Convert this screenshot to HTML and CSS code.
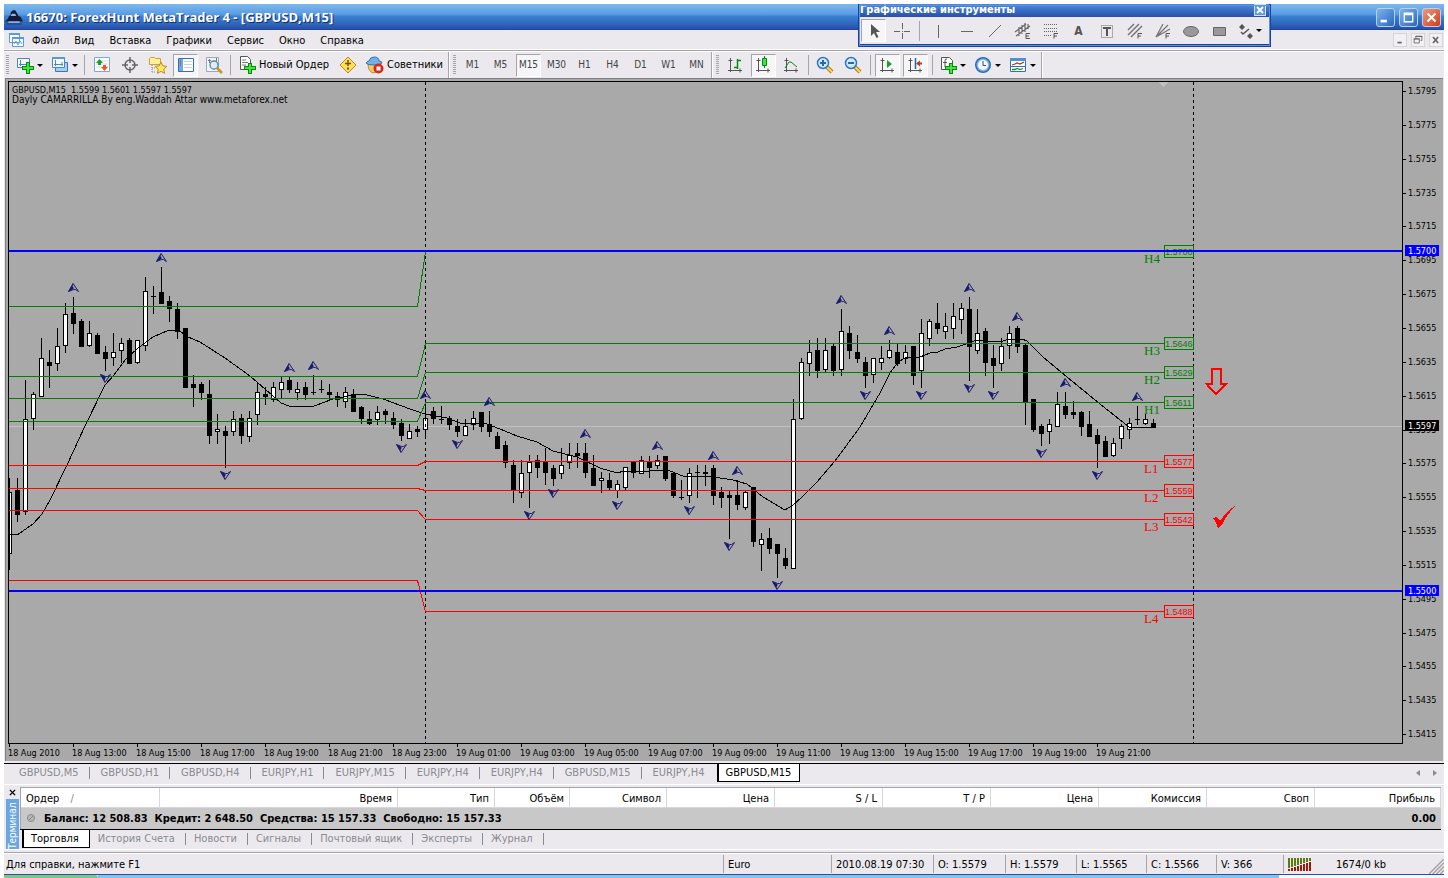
FILE: index.html
```html
<!DOCTYPE html>
<html lang="ru">
<head>
<meta charset="utf-8">
<title>16670: ForexHunt MetaTrader 4 - [GBPUSD,M15]</title>
<link rel="stylesheet" href="styles.css">
</head>
<body>
<div class="window">
  <header class="titlebar">
    <svg class="icon" viewBox="0 0 16 16"><path d="M0 12 3 9 3 8 5 6 5 4 7 2 9 2 11 5 12 7 14 8 16 12Z" fill="#101c38"/><path d="M6 5h3l1 2H5z" fill="#8fb4e0"/><path d="M1 13h14v2H1z" fill="#244f96"/><path d="M3 12h10v1H3z" fill="#c6dcf6"/></svg>
    <h1 class="title">16670: ForexHunt MetaTrader 4 - [GBPUSD,M15]</h1>
    <div class="window-buttons">
      <button class="winbtn" aria-label="Свернуть"><svg viewBox="0 0 19 19"><path d="M4 12h7v3H4z" fill="#fff"/></svg></button>
      <button class="winbtn" aria-label="Развернуть"><svg viewBox="0 0 19 19"><path d="M4 4h11v11H4zM5.500 7v6.500h8V7z" fill="#fff" fill-rule="evenodd"/></svg></button>
      <button class="winbtn winbtn-close" aria-label="Закрыть"><svg viewBox="0 0 19 19"><path d="M5 5l9 9M14 5l-9 9" stroke="#fff" stroke-width="2.200"/></svg></button>
    </div>
  </header>

  <nav class="menubar">
    <svg class="icon menu-icon" viewBox="0 0 16 16"><path d="M1.500 1.500h10v9h-10zM4.500 5.500h11v9h-11z" fill="#fff" stroke="#5b9bdc"/><path d="M1 1h11v2H1zM4 5h12v2H4z" fill="#5b9bdc"/><path d="M6 12l2-3 2 4 2-4 2 3" fill="none" stroke="#5b9bdc"/></svg>
    <button class="menu">Файл</button><button class="menu">Вид</button><button class="menu">Вставка</button><button class="menu">Графики</button><button class="menu">Сервис</button><button class="menu">Окно</button><button class="menu">Справка</button>
    <div class="mdi-buttons">
      <button class="mdi" aria-label="Свернуть окно"><svg viewBox="0 0 14 14"><path d="M4 9h5v2H4z" fill="#666"/></svg></button>
      <button class="mdi" aria-label="Восстановить окно"><svg viewBox="0 0 14 14"><path d="M4.500 5V2.500h7v5H10M2.500 5.500h6v5h-6zM2 6h7M4 3h8" fill="none" stroke="#666"/></svg></button>
      <button class="mdi" aria-label="Закрыть окно"><svg viewBox="0 0 14 14"><path d="M3.500 3.500l6 7M9.500 3.500l-6 7" stroke="#666" stroke-width="2"/></svg></button>
    </div>
  </nav>

  <div class="toolbar">
    <div class="group">
      <span class="grip"></span>
      <button class="tool drop" aria-label="Новый график"><svg class="icon" viewBox="0 0 18 18"><path d="M1.500 2.500h12v9h-12z" fill="#f4faff" stroke="#4a87c0"/><path d="M4.500 4v6M3 8.500h9" stroke="#4a87c0"/><path d="M10 6h4v4h4v4h-4v4h-4v-4H6v-4h4z" fill="#0a8a0a"/><path d="M11 7h2v4h4v2h-4v4h-2v-4H7v-2h4z" fill="#3fe43f"/></svg><span class="caret"></span></button>
      <button class="tool drop" aria-label="Профили"><svg class="icon" viewBox="0 0 18 18"><path d="M4.500 6.500h12v9h-12z" fill="#a9cdec" stroke="#3b78b4"/><path d="M1.500 1.500h12v10h-12z" fill="#f4faff" stroke="#4a87c0"/><path d="M1 1h13v2H1z" fill="#5a98d0"/><path d="M4.500 4v6M3 8.500h9M11 6v4" stroke="#4a87c0"/></svg><span class="caret"></span></button>
      <span class="sep"></span>
      <button class="tool" aria-label="Обзор рынка"><svg class="icon" viewBox="0 0 18 18"><path d="M1.500 1.500h15v14h-15z" fill="#fff" stroke="#79a9dc"/><path d="M3 5h12M3 8h12M3 11h12" stroke="#c6d8ee"/><path d="M6.500 3l3.500 4H8v2H5V7H3z" fill="#19a119"/><path d="M11.500 15L8 11h2V9h3v2h2z" fill="#f0552a"/></svg></button>
      <button class="tool" aria-label="Окно данных"><svg class="icon" viewBox="0 0 18 18"><circle cx="9" cy="9" r="5" fill="none" stroke="#666" stroke-width="1.500"/><path d="M9 1v6M9 11v6M1 9h6M11 9h6" stroke="#666" stroke-width="1.500"/></svg></button>
      <button class="tool" aria-label="Навигатор"><svg class="icon" viewBox="0 0 18 18"><path d="M.500 2.500l1-1h4l1 1h5v6H.500z" fill="#fff09a" stroke="#c3a436"/><path d="M3 9v7M3 12h3M3 16h3" stroke="#888" stroke-dasharray="1 1"/><path d="M12 6l1.800 3.800 4 .600-3 2.800.800 4.200-3.600-2-3.600 2 .800-4.200-3-2.800 4-.600z" fill="#ffe761" stroke="#bd8d1f"/></svg></button>
      <button class="tool pressed" aria-label="Терминал"><svg class="icon" viewBox="0 0 18 18"><path d="M1.500 2.500h15v13h-15z" fill="#fff" stroke="#2e70bc"/><path d="M2 3h4v12H2z" fill="#6da9e2"/><path d="M3 5h1M3 7h1M3 9h1" stroke="#c22"/><path d="M7 5.500h8M7 8.500h8M7 11.500h8" stroke="#c4d4e6"/></svg></button>
      <button class="tool" aria-label="Тестер стратегий"><svg class="icon" viewBox="0 0 18 18"><path d="M1.500 1.500h12v14h-12z" fill="#eef4fa" stroke="#9ab"/><path d="M4.500 3v4M3 4.500h3M11.500 2v5" stroke="#777"/><circle cx="9" cy="9" r="4" fill="#d9ecfa" fill-opacity=".85" stroke="#5d87a6" stroke-width="1.300"/><path d="M12 12l5 5" stroke="#c8941a" stroke-width="2.500"/></svg></button>
      <span class="sep"></span>
      <button class="tool wide"><svg class="icon" viewBox="0 0 18 18"><path d="M2.500.500h7l3 3v10h-10z" fill="#fff" stroke="#555"/><path d="M4 4h4M4 6.500h6M4 9h4" stroke="#777"/><path d="M10 7h4v3h4v4h-4v4h-4v-4H6v-4h4z" fill="#0a8a0a"/><path d="M11 8h2v3h4v2h-4v4h-2v-4H7v-2h4z" fill="#3fe43f"/></svg>Новый Ордер</button>
      <button class="tool" aria-label="MetaEditor"><svg class="icon" viewBox="0 0 18 18"><path d="M9 1l8 8-8 8-8-8z" fill="#ffdf58" stroke="#b98a1c"/><path d="M9 4v6M6 7.500h6" stroke="#725216" stroke-width="1.500"/><path d="M8 11.500h2v2H8z" fill="#725216"/></svg></button>
      <button class="tool wide"><svg class="icon" viewBox="0 0 18 18"><path d="M2 8h11v4q-2 5-6 5-5-2-5-9z" fill="#f6ca66" stroke="#b98a2c"/><path d="M0 7q1-2 3-2 1-4 5-4 5 0 5 4 3 0 3 2-1 2-8 2T0 7z" fill="#6fb2e8" stroke="#3673ac"/><circle cx="12.500" cy="12.500" r="5" fill="#d9281c"/><path d="M10.500 10.500h4v4h-4z" fill="#fff"/></svg>Советники</button>
    </div>
    <div class="group">
      <span class="grip"></span>
      <button class="tool tf">M1</button><button class="tool tf">M5</button><button class="tool tf pressed">M15</button><button class="tool tf">M30</button><button class="tool tf">H1</button><button class="tool tf">H4</button><button class="tool tf">D1</button><button class="tool tf">W1</button><button class="tool tf">MN</button>
    </div>
    <div class="group">
      <span class="grip"></span>
      <button class="tool" aria-label="Бары"><svg class="icon" viewBox="0 0 18 18"><path d="M4.500 2v14M2 14.500h14M2.500 4.500h4M14 12.500v4" stroke="#555"/><path d="M11.500 3v10M12 4.500h3M8 11.500h3" stroke="#078a17" stroke-width="1.500"/></svg></button>
      <button class="tool pressed" aria-label="Свечи"><svg class="icon" viewBox="0 0 18 18"><path d="M4.500 2v14M2 14.500h14M2.500 4.500h4M14 12.500v4" stroke="#555"/><path d="M10.500 0v12" stroke="#078a17"/><path d="M8.500 2.500h4v7h-4z" fill="#37ea3a" stroke="#078a17"/></svg></button>
      <button class="tool" aria-label="Линия"><svg class="icon" viewBox="0 0 18 18"><path d="M4.500 2v14M2 14.500h14M2.500 4.500h4M14 12.500v4" stroke="#555"/><path d="M3 12l4-6h2l6 5" fill="none" stroke="#078a17"/></svg></button>
      <span class="sep"></span>
      <button class="tool" aria-label="Увеличить"><svg class="icon" viewBox="0 0 18 18"><path d="M11 11l5 5" stroke="#a8831c" stroke-width="4"/><path d="M11 11l5 5" stroke="#ffd84c" stroke-width="2"/><circle cx="7" cy="7" r="5.500" fill="#d4e9fb" stroke="#2d78c4" stroke-width="1.500"/><path d="M4 7h6M7 4v6" stroke="#2768b4" stroke-width="2"/></svg></button>
      <button class="tool" aria-label="Уменьшить"><svg class="icon" viewBox="0 0 18 18"><path d="M11 11l5 5" stroke="#a8831c" stroke-width="4"/><path d="M11 11l5 5" stroke="#ffd84c" stroke-width="2"/><circle cx="7" cy="7" r="5.500" fill="#d4e9fb" stroke="#2d78c4" stroke-width="1.500"/><path d="M4 7h6" stroke="#2768b4" stroke-width="2"/></svg></button>
      <span class="sep"></span>
      <button class="tool pressed" aria-label="Автопрокрутка"><svg class="icon" viewBox="0 0 18 18"><path d="M4.500 2v14M2 14.500h14M2.500 4.500h4M14 12.500v4" stroke="#555"/><path d="M9 4l5 4-5 4z" fill="#17a32b"/></svg></button>
      <button class="tool pressed" aria-label="Сдвиг графика"><svg class="icon" viewBox="0 0 18 18"><path d="M4.500 2v14M2 14.500h14M2.500 4.500h4M14 12.500v4" stroke="#555"/><path d="M9.500 2v11" stroke="#1d64a8" stroke-width="1.500"/><path d="M10 7.500l4-3v2h2v2h-2v2z" fill="#c23a18"/></svg></button>
      <span class="sep"></span>
      <button class="tool drop" aria-label="Индикаторы"><svg class="icon" viewBox="0 0 18 18"><path d="M2.500 1.500h8l3 3v9h-11z" fill="#fff" stroke="#555"/><path d="M8 3q-2-1-2 2v6M4 6.500h4" fill="none" stroke="#555"/><path d="M10 7h4v3h4v4h-4v4h-4v-4H6v-4h4z" fill="#0a8a0a"/><path d="M11 8h2v3h4v2h-4v4h-2v-4H7v-2h4z" fill="#3fe43f"/></svg><span class="caret"></span></button>
      <button class="tool drop" aria-label="Периоды"><svg class="icon" viewBox="0 0 18 18"><circle cx="9" cy="9" r="8" fill="#2b6cb8"/><circle cx="9" cy="9" r="6.500" fill="#7db7ee"/><circle cx="9" cy="9" r="5" fill="#f4faff"/><path d="M9 5v4.500h3" fill="none" stroke="#445"/></svg><span class="caret"></span></button>
      <button class="tool drop" aria-label="Шаблоны"><svg class="icon" viewBox="0 0 18 18"><path d="M1.500 2.500h15v13h-15z" fill="#fff" stroke="#2e70bc"/><path d="M1 2h16v3H1z" fill="#4c92d8"/><path d="M3 9l3-1 2-1 3 1 4-2" fill="none" stroke="#a3332a" stroke-width="1.300"/><path d="M1 10.500h16" stroke="#2e70bc"/><path d="M3 13.500h3l2-1 3 1 3-1" fill="none" stroke="#16902b" stroke-width="1.300"/></svg><span class="caret"></span></button>
    </div>
  </div>

  <svg class="chart" id="chart" viewBox="4 78 1440 683" role="img" aria-label="График GBPUSD,M15">
    <rect x="4" y="78" width="1440" height="683" fill="#a9a9a9"/>
    <path d="M4 78.500h1439M5.500 78v683" stroke="#808084"/>
    <path d="M4.500 78v683M1443.500 78v683" stroke="#e6e6ea"/>
    <path class="bid" d="M9 426.500H1402"/>
    <g id="candles"></g>
    <path class="ma" d="M9 534 17 535 33 524 42 514 50 500 67 465 85 426 105 385 114 375 126 359 137 349 153 337 169 330 174 330 181 332 188 337 200 342 225 358 250 376 265 389 281 403 289 406 314 406 333 399 343 397 357 394 363 394 383 399 410 409 425 414 447 418 460 423 487 424 500 429 517 436 537 442 553 451 577 457 600 468 617 473 624 471 650 471 657 470 670 471 683 476 693 477 707 476 733 480 747 484 763 497 785 510 793 505 802 497 817 482 835 461 860 427 880 393 890 373 898 362 905 358 920 357 930 353 938 352 945 349 957 347 969 343 977 340 983 341 1003 341 1009 339 1022 339 1027 341 1043 357 1067 377 1100 404 1129 427 1133 428 1156 427"/>
    <path class="day" d="M425.500 82V743M1193.500 82V743"/>
    <g id="levels"></g>
    <path class="hline" d="M9 251H1402M9 591H1402"/>
    <g id="fractals"></g>
    <path d="M1159 82h9l-4.500 5z" fill="#c0c0c0"/>
    <path d="M1212 369h9v15h5l-10 10-9.500-10h5.500z" fill="none" stroke="#f00" stroke-width="2"/>
    <path d="M1213 518l4-1 3 4q7-11 18-17-10 8-16 21l-4 3q-2-6-5-10z" fill="#f00"/>
    <path class="frame" d="M8.500 744V81.500H1402.500V743.500H8"/>
    <g id="axes"></g>
    <text x="12" y="93">GBPUSD,M15&#160; 1.5599 1.5601 1.5597 1.5597</text>
    <text class="note" x="12" y="103">Dayly CAMARRILLA By eng.Waddah Attar www.metaforex.net</text>
  </svg>

  <div class="chart-tabs">
    <button class="tab">GBPUSD,M5</button><button class="tab">GBPUSD,H1</button><button class="tab">GBPUSD,H4</button><button class="tab">EURJPY,H1</button><button class="tab">EURJPY,M15</button><button class="tab">EURJPY,H4</button><button class="tab">EURJPY,H4</button><button class="tab">GBPUSD,M15</button><button class="tab last">EURJPY,H4</button><button class="tab active">GBPUSD,M15</button>
    <div class="scrollers">
      <button aria-label="Влево"><svg viewBox="0 0 8 8"><path d="M6 1v6L2 4z" fill="#8a8a92"/></svg></button>
      <button aria-label="Вправо"><svg viewBox="0 0 8 8"><path d="M2 1v6l4-3z" fill="#8a8a92"/></svg></button>
    </div>
  </div>

  <section class="terminal">
    <div class="side">
      <button class="side-close" aria-label="Закрыть терминал"><svg viewBox="0 0 8 8"><path d="M1 1l6 6M7 1L1 7" stroke="#000" stroke-width="1.600"/></svg></button>
      <span class="side-name">Терминал</span>
    </div>
    <div class="terminal-main">
      <table class="orders">
        <colgroup><col class="c139"><col class="c238"><col class="c97"><col class="c75"><col class="c97"><col class="c108"><col class="c108"><col class="c108"><col class="c108"><col class="c108"><col class="c108"><col></colgroup>
        <thead><tr><th class="first">Ордер <span class="sort">/</span></th><th>Время</th><th>Тип</th><th>Объём</th><th>Символ</th><th>Цена</th><th>S / L</th><th>T / P</th><th>Цена</th><th>Комиссия</th><th>Своп</th><th>Прибыль</th></tr></thead>
        <tbody><tr><td colspan="11" class="balance"><svg class="dot" viewBox="0 0 10 10"><circle cx="5" cy="5" r="3.500" fill="#b8b8b8" stroke="#888"/><path d="M3 7l4-4" stroke="#888"/></svg>Баланс: 12 508.83&#160; Кредит: 2 648.50&#160; Средства: 15 157.33&#160; Свободно: 15 157.33</td><td class="sum">0.00</td></tr></tbody>
      </table>
      <div class="terminal-tabs">
        <button class="tab active">Торговля</button><button class="tab">История Счета</button><button class="tab">Новости</button><button class="tab">Сигналы</button><button class="tab">Почтовый ящик</button><button class="tab">Эксперты</button><button class="tab">Журнал</button>
      </div>
    </div>
  </section>

  <footer class="status">
    <span>Для справки, нажмите F1</span><span>Euro</span><span>2010.08.19 07:30</span><span>O: 1.5579</span><span>H: 1.5579</span><span>L: 1.5565</span><span>C: 1.5566</span><span>V: 366</span>
    <span class="net"><svg class="bars" viewBox="0 0 24 13"><path d="M0 0h2v10H0zM3 0h2v9H3zM6 0h2v8H6zM9 0h2v7H9zM12 0h2v6h-2zM15 0h2v5h-2zM18 0h2v4h-2zM21 0h2v3h-2z" fill="#5a7a12"/><path d="M0 11h2v2H0zM3 10h2v3H3zM6 9h2v4H6zM9 8h2v5H9zM12 7h2v6h-2zM15 6h2v7h-2zM18 5h2v8h-2zM21 4h2v9h-2z" fill="#9a1a0a"/></svg>1674/0 kb</span>
    <svg class="resize" viewBox="0 0 16 16"><path d="M0 16L16 0M4 16L16 4M8 16l8-8M12 16l4-4" stroke="#a2a2a8" stroke-width="1.500"/></svg>
  </footer>
  <div class="taskbar"><span class="start"></span><span class="tasks"></span><span class="tray"></span></div>

  <div class="palette">
    <div class="palette-head"><span>Графические инструменты</span><button aria-label="Закрыть панель"><svg viewBox="0 0 10 10"><path d="M2 2l6 6M8 2L2 8" stroke="#fff" stroke-width="1.800"/></svg></button></div>
    <div class="palette-body">
      <button class="tool pressed" aria-label="Курсор"><svg class="icon" viewBox="0 0 18 18"><path d="M6 2v12l3-3 2.500 5 2-1-2.500-5h4z" fill="#555"/></svg></button>
      <button class="tool" aria-label="Перекрестие"><svg class="icon" viewBox="0 0 18 18"><path d="M9.500 1v6M9.500 11v6M1 9.500h6M11 9.500h6M9 9.500h1" stroke="#666"/></svg></button>
      <span class="sep"></span>
      <button class="tool" aria-label="Вертикальная линия"><svg class="icon" viewBox="0 0 18 18"><path d="M8.500 3v13" stroke="#666"/></svg></button>
      <button class="tool" aria-label="Горизонтальная линия"><svg class="icon" viewBox="0 0 18 18"><path d="M3 9.500h12" stroke="#666"/></svg></button>
      <button class="tool" aria-label="Трендовая линия"><svg class="icon" viewBox="0 0 18 18"><path d="M3 15L15 3" stroke="#666"/></svg></button>
      <button class="tool" aria-label="Канал"><svg class="icon" viewBox="0 0 18 18"><path d="M1 10L12 2M2 14L16 4M5 5v9M8 3v9M11 1v9M14 2v5" stroke="#666" stroke-width="1.200"/><path d="M16 11.500h-4v5h4M12 14h3" fill="none" stroke="#555"/></svg></button>
      <button class="tool" aria-label="Фибоначчи"><svg class="icon" viewBox="0 0 18 18"><path d="M2 2.500h13M2 6.500h13M2 9.500h13M2 13.500h8" stroke="#666" stroke-dasharray="1 1"/><path d="M16 11.500h-4v5M12 14h3" fill="none" stroke="#555"/></svg></button>
      <button class="tool letter" aria-label="Текст">A</button>
      <button class="tool" aria-label="Метка"><svg class="icon" viewBox="0 0 18 18"><path d="M3.500 3.500h11v12h-11z" fill="none" stroke="#666" stroke-dasharray="1 1"/><path d="M5 6h8M9 6v8" stroke="#555" stroke-width="2"/></svg></button>
      <button class="tool" aria-label="Веер каналов"><svg class="icon" viewBox="0 0 18 18"><path d="M2 8l6-6M2 13L13 2M5 15L16 4" stroke="#777" stroke-width="1.500"/><path d="M16 11.500h-4v5M12 14h3" fill="none" stroke="#555"/></svg></button>
      <button class="tool" aria-label="Веер Фибоначчи"><svg class="icon" viewBox="0 0 18 18"><path d="M2 15L9 2M2 15L14 3M2 15l14-8M2 15l5-3" stroke="#777" stroke-width="1.300"/><path d="M16 11.500h-4v5M12 14h3" fill="none" stroke="#555"/></svg></button>
      <button class="tool" aria-label="Эллипс"><svg class="icon" viewBox="0 0 18 18"><ellipse cx="9" cy="9.500" rx="7.500" ry="5" fill="#999" stroke="#666"/></svg></button>
      <button class="tool" aria-label="Прямоугольник"><svg class="icon" viewBox="0 0 18 18"><path d="M3.500 5.500h12v8h-12z" fill="#999" stroke="#666"/></svg></button>
      <button class="tool drop" aria-label="Стрелки"><svg class="icon" viewBox="0 0 18 18"><path d="M5 2l3 3-3 3-3-3zM13 11l3 3-3 3-3-3z" fill="#555"/><path d="M4 10l2 2 6-5" fill="none" stroke="#555" stroke-width="1.500"/></svg><span class="caret"></span></button>
    </div>
  </div>
</div>
<script src="chart.js"></script>
</body>
</html>
```

FILE: styles.css
```css
* { box-sizing: border-box; }

body {
  margin: 0;
  padding: 4px 4px 0;
  background: #fff;
  color: #000;
  font: 11px/14px "DejaVu Sans Condensed", "Noto Sans", sans-serif;
}

button {
  margin: 0;
  padding: 0;
  border: 0;
  background: none;
  color: inherit;
  font: inherit;
  white-space: nowrap;
}

svg { display: block; flex: none; }

.icon { width: 18px; height: 18px; }

.window {
  position: relative;
  display: flex;
  flex-direction: column;
  background: #ebe9ed;
}

/* Title bar */
.titlebar {
  display: flex;
  align-items: center;
  gap: 3px;
  height: 26px;
  padding: 0 3px 0 1px;
  background: linear-gradient(#7bb9ec 0, #5f9fe6 35%, #5a9ae2 40%, #3a80d2 48%, #2f68be 75%, #2850a8 95%, #1f409a 100%);
}

.title {
  margin: 0;
  color: #fff;
  font: bold 13px/18px "Open Sans", "Noto Sans", sans-serif;
  text-shadow: 1px 1px 0 #12306e;
}

.window-buttons { display: flex; gap: 4px; margin-left: auto; }

.winbtn {
  width: 19px;
  height: 19px;
  border: 1px solid #b4d2f2;
  border-radius: 3px;
  background: linear-gradient(135deg, #7cb4ee, #2c66be);
}

.winbtn-close { background: linear-gradient(135deg, #f09a7c, #d03c14); }

/* Menu */
.menubar {
  display: flex;
  align-items: center;
  height: 21px;
  padding: 0 1px 0 4px;
  border-bottom: 1px solid #a5a4ab;
  box-shadow: inset 0 -1px #fff;
}

.menu-icon { width: 16px; height: 16px; }
.menu { padding: 1px 8px 0 7px; }
.menu-icon + .menu { padding-left: 8px; }
.mdi-buttons { display: flex; gap: 4px; margin-left: auto; }

.mdi {
  width: 14px;
  height: 14px;
  border: 1px solid #d6d4da;
  background: #f2f0f3;
}

/* Toolbars */
.toolbar {
  display: flex;
  height: 27px;
  border-top: 1px solid #fff;
}

.group {
  display: flex;
  align-items: center;
  gap: 3px;
  padding: 0 2px;
  border-right: 1px solid #a5a4ab;
  box-shadow: 1px 0 #fff;
}

.group + .group { padding-left: 4px; }

.grip {
  width: 3px;
  height: 20px;
  margin-right: 1px;
  background: repeating-linear-gradient(#a5a4ab 0 1px, transparent 1px 2px);
}

.sep { width: 1px; height: 20px; margin: 0 1px; background: #a5a4ab; }

.tool {
  display: flex;
  align-items: center;
  justify-content: center;
  flex: none;
  width: 25px;
  height: 23px;
}

.drop { width: 32px; gap: 3px; }
.wide { width: auto; padding: 0 3px; gap: 3px; }
.tf { color: #444; font-size: 10px; }

.pressed {
  border: 1px solid;
  border-color: #a5a4ab #fff #fff #a5a4ab;
  background: #f6f5f7;
}

.caret {
  border: 3px solid transparent;
  border-top-color: #000;
  border-bottom-width: 0;
}

/* Floating drawing tools */
.palette {
  position: absolute;
  top: 0;
  right: 173px;
  width: 413px;
  border: 1px solid #1f409a;
  border-width: 0 2px 3px 1px;
  outline: 1px solid #5a92e0;
  outline-offset: -2px;
  background: #ebe9ed;
}

.palette-head {
  display: flex;
  align-items: center;
  justify-content: space-between;
  height: 13px;
  padding: 0 4px 2px 1px;
  background: linear-gradient(#4a8cdc, #2850a8);
  color: #fff;
  font-weight: bold;
}

.palette-head svg { width: 10px; height: 10px; background: #5a9ae2; outline: 1px solid #cfe2f6; }

.palette-body {
  display: flex;
  align-items: center;
  gap: 3px;
  height: 27px;
  padding: 0 2px;
}

.palette-body .sep { margin: 0 3px 0 2px; }
.palette-body .drop { width: 30px; gap: 1px; }
.letter { color: #555; font-weight: bold; font-size: 12px; }

/* Chart */
.chart { width: 100%; height: auto; shape-rendering: crispEdges; }
.chart text { font: 9px "DejaVu Sans Condensed", "Noto Sans", sans-serif; }
.chart .note { font-size: 10px; }
.bid { stroke: #c0c0c0; }
.ma { fill: none; stroke: #000; }
.day { stroke: #000; stroke-dasharray: 3 3; }
.hline { stroke: #00f; stroke-width: 2; }
.frame, .tick { fill: none; stroke: #000; }
.up { fill: #fff; stroke: #000; }
.wick { stroke: #000; }
.level { fill: none; stroke: currentColor; }
.green { color: #008000; }
.red { color: #f00; }
.chart .level-name { fill: currentColor; font: 13px "Liberation Serif", serif; }
.chart .level-price { fill: currentColor; font: 9px "Liberation Sans", sans-serif; }
.fractal { shape-rendering: auto; }
.chart .tag-text { fill: #fff; }

/* Tabs */
.chart-tabs {
  display: flex;
  align-items: flex-start;
  height: 22px;
  margin-top: 2px;
  padding-left: 1px;
  border-top: 1px solid #000;
  border-bottom: 1px solid #fff;
}

.tab {
  display: flex;
  align-items: center;
  height: 18px;
  color: #8a8a92;
}

.tab::after {
  content: "";
  width: 1px;
  height: 12px;
  background: #8a8a92;
}

.tab.active::after, .tab.last::after { display: none; }

.chart-tabs .tab { padding-left: 11px; gap: 10px; }
.chart-tabs .tab:first-child { padding-left: 14px; }

.tab.active {
  border: 1px solid #000;
  border-width: 0 1px 1px 2px;
  background: #fff;
  color: #000;
}

.chart-tabs .last { padding-right: 12px; }
.chart-tabs .active { padding: 0 8px 0 7px; }

.scrollers { display: flex; gap: 9px; margin: 5px 5px 0 auto; }
.scrollers svg { width: 8px; height: 8px; }

/* Terminal */
.terminal { display: flex; padding: 2px 3px 0 1px; border-bottom: 1px solid #fff; }

.side {
  display: flex;
  flex-direction: column;
  align-items: center;
  width: 14px;
  margin-right: 1px;
}

.side-close { padding: 2px 3px 3px; }
.side-close svg { width: 7px; height: 7px; }

.side-name {
  flex: 1 0 0;
  width: 13px;
  min-height: 0;
  background: #6aa6e0;
  color: #fff;
  font-size: 10px;
  line-height: 13px;
  writing-mode: vertical-rl;
  transform: rotate(180deg);
}

.terminal-main { flex: 1; min-width: 0; }

.orders {
  width: 100%;
  border-top: 1px solid #a5a4ab;
  border-left: 1px solid #a5a4ab;
  border-spacing: 0;
  table-layout: fixed;
}

.c139 { width: 139px; }
.c238 { width: 238px; }
.c97 { width: 97px; }
.c75 { width: 75px; }
.c108 { width: 108px; }

th {
  height: 20px;
  padding: 2px 5px 0;
  border-right: 1px solid #d8d6da;
  border-bottom: 1px solid #d8d6da;
  background: #fff;
  font-weight: normal;
  text-align: right;
}

th.first { text-align: left; }
.sort { margin-left: 8px; color: #8a8a92; }

td {
  height: 21px;
  padding: 0 5px;
  background: #c8c8c8;
  font-weight: bold;
}

.dot { display: inline-block; width: 10px; height: 10px; margin-right: 8px; vertical-align: -1px; }
.sum { text-align: right; }

.terminal-tabs {
  display: flex;
  height: 20px;
  padding-left: 2px;
  border-top: 1px solid #000;
}

.terminal-tabs .tab { padding-left: 8px; gap: 10px; }
.terminal-tabs .active { padding: 0 10px 0 7px; }

/* Status bar */
.status {
  display: grid;
  grid-template-columns: 1fr 108px 102px 72px 71px 70px 70px 67px 146px 15px;
  align-items: center;
  height: 22px;
  margin-top: 2px;
  border-top: 1px solid #a5a4ab;
  box-shadow: inset 0 1px #fff;
}

.status > span { padding: 2px 0 0 4px; line-height: 16px; border-left: 1px solid #a5a4ab; }
.status > span:first-child { padding-left: 2px; border-left: 0; }
.net { display: flex; align-items: center; gap: 24px; }
.bars { width: 24px; height: 13px; }
.resize { width: 15px; height: 15px; align-self: end; }

/* Top edge of the system taskbar */
.taskbar { display: flex; height: 4px; border-top: 1px solid #2850a8; }
.start { width: 94px; border-radius: 0 3px 0 0; background: #7cc884; }
.tasks { flex: 1; background: #84c3ec; }
.tray { width: 165px; background: #f2fbff; }
```

FILE: chart.js
```js
const SVG = "http://www.w3.org/2000/svg";

function add(parent, tag, attrs, text) {
  const el = document.createElementNS(SVG, tag);
  for (const name in attrs) el.setAttribute(name, attrs[name]);
  if (text) el.textContent = text;
  parent.appendChild(el);
  return el;
}

// One entry per 15-minute bar: high, body top, body bottom, low (chart y), w = up, b = down, d = doji
const bars = `478 492 554 570 w|478 490 515 522 b|380 419 512 515 w|392 394 419 430 w|338 358 397 397 w|350 362 366 388 b|328 346 364 371 w|303 314 346 353 w|297 313 324 334 b|319 321 347 347 b
321 333 346 347 w|333 335 354 354 b|346 352 359 371 b|333 352 358 366 w|338 343 351 363 w|338 340 364 364 b|340 340 363 364 w|277 291 346 351 w|286 296 296 314 d|267 292 304 304 b
296 301 309 322 b|303 309 332 339 b|328 328 388 388 b|375 384 388 407 b|382 384 393 400 b|380 394 436 444 b|414 429 432 444 w|426 431 436 468 b|411 419 432 436 w|414 418 436 444 b
411 418 437 442 w|383 392 415 425 w|387 394 397 405 b|382 387 400 402 w|377 382 390 399 w|377 380 390 393 b|382 389 393 400 w|382 387 395 400 b|375 392 392 395 d|380 389 389 393 d
384 392 395 401 b|392 396 400 407 b|387 392 402 408 w|389 394 412 412 b|406 407 419 424 b|411 419 424 425 b|406 412 420 425 w|409 411 415 424 b|412 418 425 429 b|419 423 436 441 b
424 431 439 439 w|426 429 432 437 b|399 418 430 436 w|407 411 419 424 b|406 419 419 424 d|416 418 425 430 b|419 426 432 437 b|419 426 436 436 w|411 418 425 430 w|412 412 427 432 b
411 424 432 437 b|432 436 449 449 b|441 445 463 468 b|460 465 491 503 b|460 473 493 498 w|455 462 473 508 w|455 460 468 478 b|448 461 473 485 b|465 468 479 486 b|448 465 474 479 w
443 455 463 469 w|443 453 456 468 b|443 453 473 478 b|455 468 486 486 b|472 478 481 493 w|473 480 488 490 b|480 484 491 498 w|467 467 488 490 w|461 462 473 478 b|456 460 474 474 w
456 461 468 478 b|455 460 466 469 w|456 456 479 481 b|472 473 496 498 b|480 497 497 500 d|468 473 496 503 w|465 472 472 498 d|465 472 474 486 b|465 468 496 505 b|487 492 498 508 b
491 495 498 539 b|480 495 505 510 b|491 492 508 510 w|487 487 542 547 b|533 539 545 571 w|528 538 549 554 b|544 544 554 578 b|548 558 566 569 b|399 419 569 569 w|358 362 419 420 w
340 352 364 376 w|338 350 371 378 b|338 350 370 372 w|344 346 371 376 b|309 331 370 376 w|326 333 351 359 b|335 352 359 363 b|357 362 376 388 b|358 358 375 383 w|346 358 363 370 w
340 350 358 359 w|344 352 364 366 b|345 352 359 364 w|346 346 376 385 b|319 333 371 388 w|319 321 339 346 w|303 323 329 334 b|313 326 332 339 w|303 316 329 339 w|303 308 320 334 w
297 309 347 381 b|309 333 351 354 w|328 331 363 376 b|345 358 366 388 b|338 346 364 371 w|326 333 346 359 w|326 328 347 353 b|344 345 403 425 b|399 399 430 432 b|424 426 434 446 b
419 424 432 444 w|392 404 427 427 w|392 406 415 419 b|401 412 415 419 b|411 412 427 436 b|411 424 437 437 b|429 435 444 468 b|436 441 457 457 b|438 443 456 457 w|424 426 439 449 w
418 423 430 439 w|406 419 419 425 d|414 419 424 425 w|419 423 427 427 b`;

const candles = document.getElementById("candles");
bars.split(/[|\n]/).forEach((entry, i) => {
  const [high, top, bottom, low, kind] = entry.split(" ");
  const x = 9 + 8 * i;
  add(candles, "path", { class: "wick", d: `M${x + 0.5} ${high}V${low}` });
  if (kind === "w") {
    const left = i ? x - 1.5 : x;
    add(candles, "rect", { class: "up", x: left, y: +top + 0.5, width: x + 2.5 - left, height: bottom - top - 1 });
  } else if (kind === "b") {
    add(candles, "rect", { x: x - 2, y: top, width: 5, height: bottom - top });
  } else {
    add(candles, "rect", { x: x - 2, y: top, width: 5, height: 1 });
  }
});

// Camarilla levels: colour, y for the previous day, y for the current day, name, price
const levels = document.getElementById("levels");
[
  ["green", 306, 251, "H4", "1.5700"],
  ["green", 376, 343, "H3", "1.5646"],
  ["green", 398, 372, "H2", "1.5629"],
  ["green", 421, 402, "H1", "1.5611"],
  ["red", 465, 461, "L1", "1.5577"],
  ["red", 488, 490, "L2", "1.5559"],
  ["red", 510, 519, "L3", "1.5542"],
  ["red", 580, 611, "L4", "1.5488"],
].forEach(([color, before, now, name, price]) => {
  const g = add(levels, "g", { class: color });
  add(g, "path", { class: "level", d: `M9 ${before + 0.5}H417.500L425.500 ${now + 0.5}H1164` });
  add(g, "rect", { class: "level", x: 1164.5, y: now - 5.5, width: 29, height: 12 });
  add(g, "text", { class: "level-price", x: 1165, y: now + 4 }, price);
  add(g, "text", { class: "level-name", x: 1144, y: now + 12 }, name);
});

const fractals = document.getElementById("fractals");
function drawFractals(points, flip) {
  points.forEach(([x, y]) => {
    const place = flip ? `translate(${x + 0.5} ${y + 9}) scale(1 -1)` : `translate(${x + 0.5} ${y})`;
    const g = add(fractals, "g", { class: "fractal", transform: place });
    add(g, "path", { d: "M0 0L-5.500 9 0 6V4.500L-1 3z", fill: "#191970" });
    add(g, "path", { d: "M-.500 .500L5 8.500 2 6.500H0L-5 8.500z", fill: "none", stroke: "#191970" });
  });
}
drawFractals([[73, 283], [161, 253], [289, 363], [313, 361], [425, 390], [489, 397], [585, 429], [657, 441], [713, 451], [737, 466], [841, 295], [889, 326], [969, 283], [1017, 312], [1065, 378], [1137, 392]], false);
drawFractals([[105, 374], [225, 471], [401, 444], [457, 440], [529, 511], [553, 489], [617, 501], [689, 506], [729, 542], [777, 581], [865, 391], [921, 391], [969, 384], [993, 391], [1041, 449], [1097, 471]], true);

const axes = document.getElementById("axes");
for (let i = 0; i < 20; i++) {
  const y = Math.round(91 + 33.85 * i);
  add(axes, "path", { class: "tick", d: `M1403 ${y + 0.5}h3` });
  add(axes, "text", { x: 1408, y: y + 3 }, (1.5795 - 0.002 * i).toFixed(4));
}
[["1.5700", 251, "#00f"], ["1.5597", 426, "#000"], ["1.5500", 591, "#00f"]].forEach(([price, y, fill]) => {
  add(axes, "rect", { x: 1405, y: y - 6, width: 34, height: 11, fill });
  add(axes, "text", { class: "tag-text", x: 1408, y: y + 3 }, price);
});
["18 Aug 2010", "18 Aug 13:00", "18 Aug 15:00", "18 Aug 17:00", "18 Aug 19:00", "18 Aug 21:00", "18 Aug 23:00", "19 Aug 01:00", "19 Aug 03:00", "19 Aug 05:00", "19 Aug 07:00", "19 Aug 09:00", "19 Aug 11:00", "19 Aug 13:00", "19 Aug 15:00", "19 Aug 17:00", "19 Aug 19:00", "19 Aug 21:00"].forEach((label, i) => {
  add(axes, "path", { class: "tick", d: `M${9.5 + 64 * i} 744v3` });
  add(axes, "text", { x: 8 + 64 * i, y: 756 }, label);
});
```
